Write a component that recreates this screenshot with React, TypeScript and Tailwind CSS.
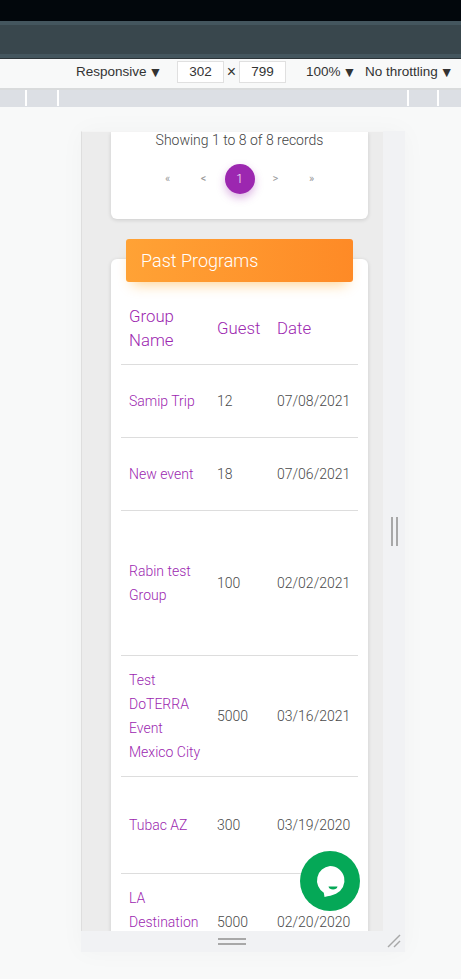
const ROWS = [
  { name: ['Samip Trip'], guest: '12', date: '07/08/2021', height: 'h-[73px]' },
  { name: ['New event'], guest: '18', date: '07/06/2021', height: 'h-[73px]' },
  { name: ['Rabin test', 'Group'], guest: '100', date: '02/02/2021', height: 'h-[145px]' },
  { name: ['Test', 'DoTERRA', 'Event', 'Mexico City'], guest: '5000', date: '03/16/2021', height: 'h-[121px]' },
  { name: ['Tubac AZ'], guest: '300', date: '03/19/2020', height: 'h-[97px]' },
  { name: ['LA', 'Destination', 'Event'], guest: '5000', date: '02/20/2020', height: 'h-[97px]' },
];

const Caret = () => <span className="ml-[2px] text-[14px] leading-none text-[#333]">▼</span>;

function DevToolbar() {
  return (
    <div className="font-['Liberation_Sans',sans-serif] text-[13.5px] text-[#333]">
      <div className="h-[21px] bg-[#02070c]" />
      <div className="h-[37px] bg-[#39474d] border-y-4 border-[#44565e]" />
      <div className="h-[32px] pb-[3px] flex items-center bg-[#f8f9f9] border-t border-[#2c3438] border-b-2 border-b-[#d9dbdc]">
        <div className="ml-[76px] w-[101px] flex items-center">Responsive<Caret /></div>
        <div className="w-[47px] h-[22px] flex items-center justify-center bg-white border border-[#e0e0e0]">302</div>
        <div className="w-[15px] text-center text-[16px] leading-none">×</div>
        <div className="w-[47px] h-[22px] flex items-center justify-center bg-white border border-[#e0e0e0]">799</div>
        <div className="ml-[20px] w-[59px] flex items-center">100%<Caret /></div>
        <div className="flex items-center whitespace-nowrap">No throttling<Caret /></div>
      </div>
      <div className="h-[17px] flex bg-[#dcdfe4] pb-[1px]">
        <div className="w-[25px]" />
        <div className="w-[2px] bg-white" />
        <div className="w-[30px]" />
        <div className="w-[2px] bg-white" />
        <div className="w-[348px]" />
        <div className="w-[2px] bg-white" />
        <div className="w-[28px]" />
        <div className="w-[2px] bg-white" />
      </div>
    </div>
  );
}

function ChatButton() {
  return (
    <div className="absolute right-[23px] bottom-[20px] w-[60px] h-[60px] rounded-full bg-[#05a857] flex items-center justify-center">
      <svg viewBox="0 0 60 60" className="w-[60px] h-[60px]">
        <path d="M30 15a14.500 14.500 0 0 1 6 27.700c-3.500 1.700-7.500 2.300-11.500 3.300l-.7-4.300A14.500 14.500 0 0 1 30 15z" fill="#fff" />
        <path d="M28.500 35.500h9c-.5 2.200-2.200 3-4.500 3s-4-.8-4.500-3z" fill="#05a857" />
      </svg>
    </div>
  );
}

function PastPrograms() {
  return (
    <div className="flow-root mt-[40px] ml-[29px] w-[257px] bg-white rounded-[6px] shadow-[0_1px_4px_rgba(0,0,0,0.14)] px-[10px]">
      <div className="-mt-[20px] mx-[5px] h-[43px] px-[15px] flex items-center rounded-[3px] bg-gradient-to-r from-[#ffa235] to-[#fe8a26] shadow-[0_8px_14px_-6px_rgba(255,152,0,0.45)] text-[18px] font-light text-white">
        Past Programs
      </div>
      <table className="w-[237px] table-fixed border-collapse text-[14px] leading-[24px] font-light text-[#4a4a4a]">
        <colgroup>
          <col className="w-[88px]" />
          <col className="w-[60px]" />
          <col />
        </colgroup>
        <thead>
          <tr className="border-b border-[#dddddd] text-[16.8px] text-[#9c27b0]">
            <th className="pl-[8px] pt-[22px] pb-[12px] text-left font-light">Group<br />Name</th>
            <th className="pl-[8px] pt-[22px] pb-[12px] text-left font-light">Guest</th>
            <th className="pl-[8px] pt-[22px] pb-[12px] text-left font-light">Date</th>
          </tr>
        </thead>
        <tbody>
          {ROWS.map(row => (
            <tr key={row.date} className={`${row.height} border-b border-[#dddddd]`}>
              <td className="pl-[8px] text-[#9c27b0]">
                {row.name.map(line => <div key={line}>{line}</div>)}
              </td>
              <td className="pl-[8px]">{row.guest}</td>
              <td className="pl-[8px] whitespace-nowrap">{row.date}</td>
            </tr>
          ))}
        </tbody>
      </table>
    </div>
  );
}

export default function App() {
  return (
    <div className="w-[461px] h-[979px] overflow-hidden bg-[#f8f9f9]">
      <DevToolbar />

      {/* device frame */}
      <div className="mt-[24px] ml-[81px] w-[324px] shadow-[0_0_24px_rgba(0,0,0,0.03)]">
        <div className="flex h-[800px]">
          <div className="relative w-[302px] h-[800px] overflow-hidden bg-[#ececec] border-l border-[#dedede] border-t border-t-[#f4f4f4] font-['Roboto',sans-serif]">
            <div className="ml-[29px] w-[257px] h-[87px] bg-white rounded-b-[6px] shadow-[0_1px_4px_rgba(0,0,0,0.14)] flex flex-col items-center">
              <div className="text-[14px] font-light leading-[20px] -mt-[2px] text-[#444]">Showing 1 to 8 of 8 records</div>
              <div className="mt-[14px] flex items-center text-[11px] text-[#999]">
                <span className="w-[30px] text-center">«</span>
                <span className="w-[42px] text-center">&lt;</span>
                <span className="w-[30px] h-[30px] rounded-full bg-[#9c27b0] shadow-[0_4px_8px_rgba(156,39,176,0.35)] text-[12px] font-light text-white flex items-center justify-center">1</span>
                <span className="w-[42px] text-center">&gt;</span>
                <span className="w-[30px] text-center">»</span>
              </div>
            </div>
            <PastPrograms />
            <ChatButton />
          </div>
          <div className="w-[22px] bg-[#f1f2f4] flex items-center justify-center gap-[3px]">
            <div className="w-[2px] h-[29px] bg-[#a8a8a8]" />
            <div className="w-[2px] h-[29px] bg-[#a8a8a8]" />
          </div>
        </div>
        <div className="relative h-[21px] bg-[#f1f2f4] flex flex-col items-center justify-center gap-[3px] pr-[22px]">
          <div className="w-[28px] h-[2px] bg-[#a8a8a8]" />
          <div className="w-[28px] h-[2px] bg-[#a8a8a8]" />
          <svg viewBox="0 0 14 14" className="absolute right-[4px] top-[3px] w-[14px] h-[14px]" stroke="#a8a8a8" strokeWidth="1.500">
            <line x1="1" y1="13" x2="13" y2="1" />
            <line x1="7" y1="13" x2="13" y2="7" />
          </svg>
        </div>
      </div>
    </div>
  );
}
